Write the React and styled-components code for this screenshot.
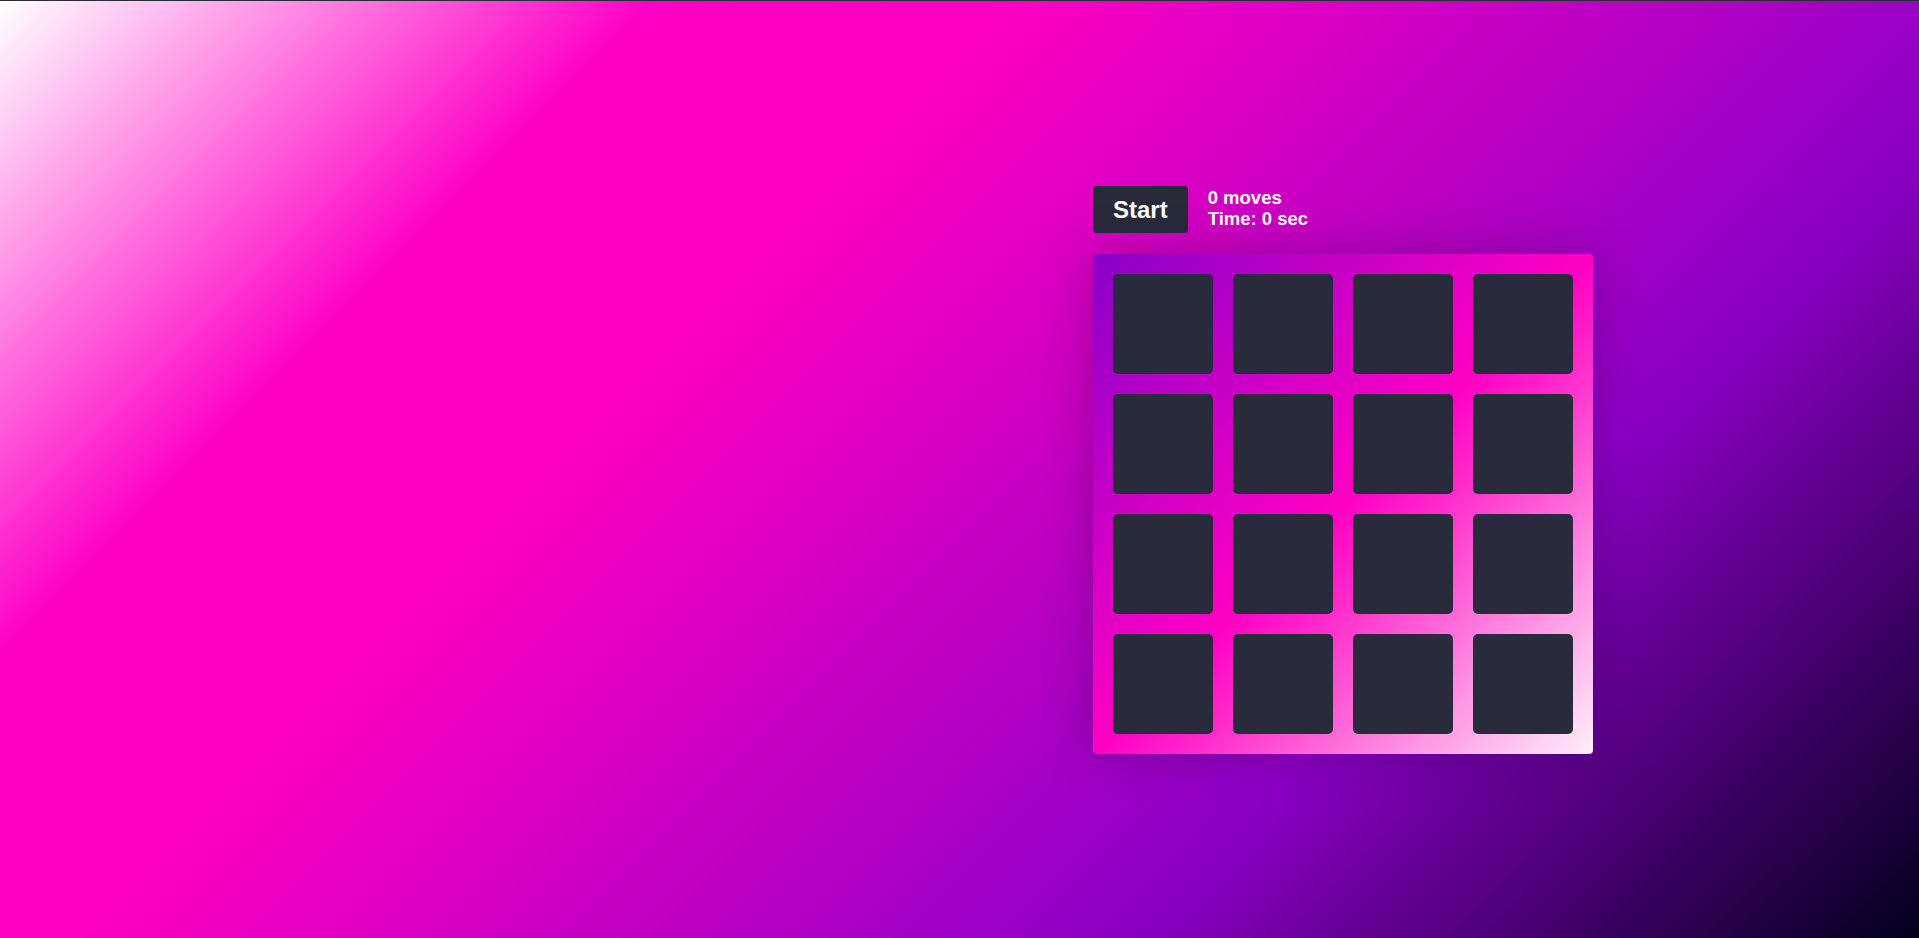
import React from "react";
import styled, { createGlobalStyle } from "styled-components";

const Global = createGlobalStyle`
  * { box-sizing: border-box; }
  html, body { margin: 0; padding: 0; }
  body {
    font-family: "Liberation Sans", Arial, sans-serif;
    background: #282a36;
  }
`;

const Page = styled.main`
  min-height: 100vh;
  border-top: 1px solid #282a36;
  background: linear-gradient(
    135deg,
    #ffffff 0%,
    #ff00c4 23%,
    #ff00c0 35%,
    #8c00c6 72%,
    #02001c 100%
  );
  display: grid;
  grid-template-columns: 1093px auto;
  align-items: center;
`;

const Game = styled.section`
  grid-column: 2;
  display: flex;
  flex-direction: column;
  gap: 21px;
`;

const Controls = styled.div`
  display: flex;
  align-items: center;
  gap: 20px;
`;

const StartButton = styled.button`
  font-family: "Liberation Sans", Arial, sans-serif;
  font-size: 24px;
  font-weight: 700;
  color: #ffffff;
  background: #282a3a;
  border: none;
  border-radius: 4px;
  padding: 10px 20px;
  height: 47px;
  cursor: pointer;
`;

const Stats = styled.div`
  color: #ffffff;
  font-size: 18.5px;
  font-weight: 700;
  line-height: 20.7px;
`;

const Board = styled.div`
  width: 500px;
  height: 500px;
  padding: 20px;
  display: grid;
  grid-template-columns: repeat(4, 100px);
  grid-template-rows: repeat(4, 100px);
  gap: 20px;
  border-radius: 4px;
  background: linear-gradient(135deg, #8800c8 0%, #ff00c4 50%, #ff22c9 58%, #fff0fa 100%);
  box-shadow: 0 0 50px rgba(40, 0, 50, 0.3);
`;

const Card = styled.div`
  background: #292a3c;
  border-radius: 5px;
`;

export default function App() {
  const cards = Array.from({ length: 16 }, (_, i) => i);
  return (
    <>
      <Global />
      <Page>
        <Game>
          <Controls>
            <StartButton>Start</StartButton>
            <Stats>
              <div>0 moves</div>
              <div>Time: 0 sec</div>
            </Stats>
          </Controls>
          <Board>
            {cards.map((i) => (
              <Card key={i} />
            ))}
          </Board>
        </Game>
      </Page>
    </>
  );
}
